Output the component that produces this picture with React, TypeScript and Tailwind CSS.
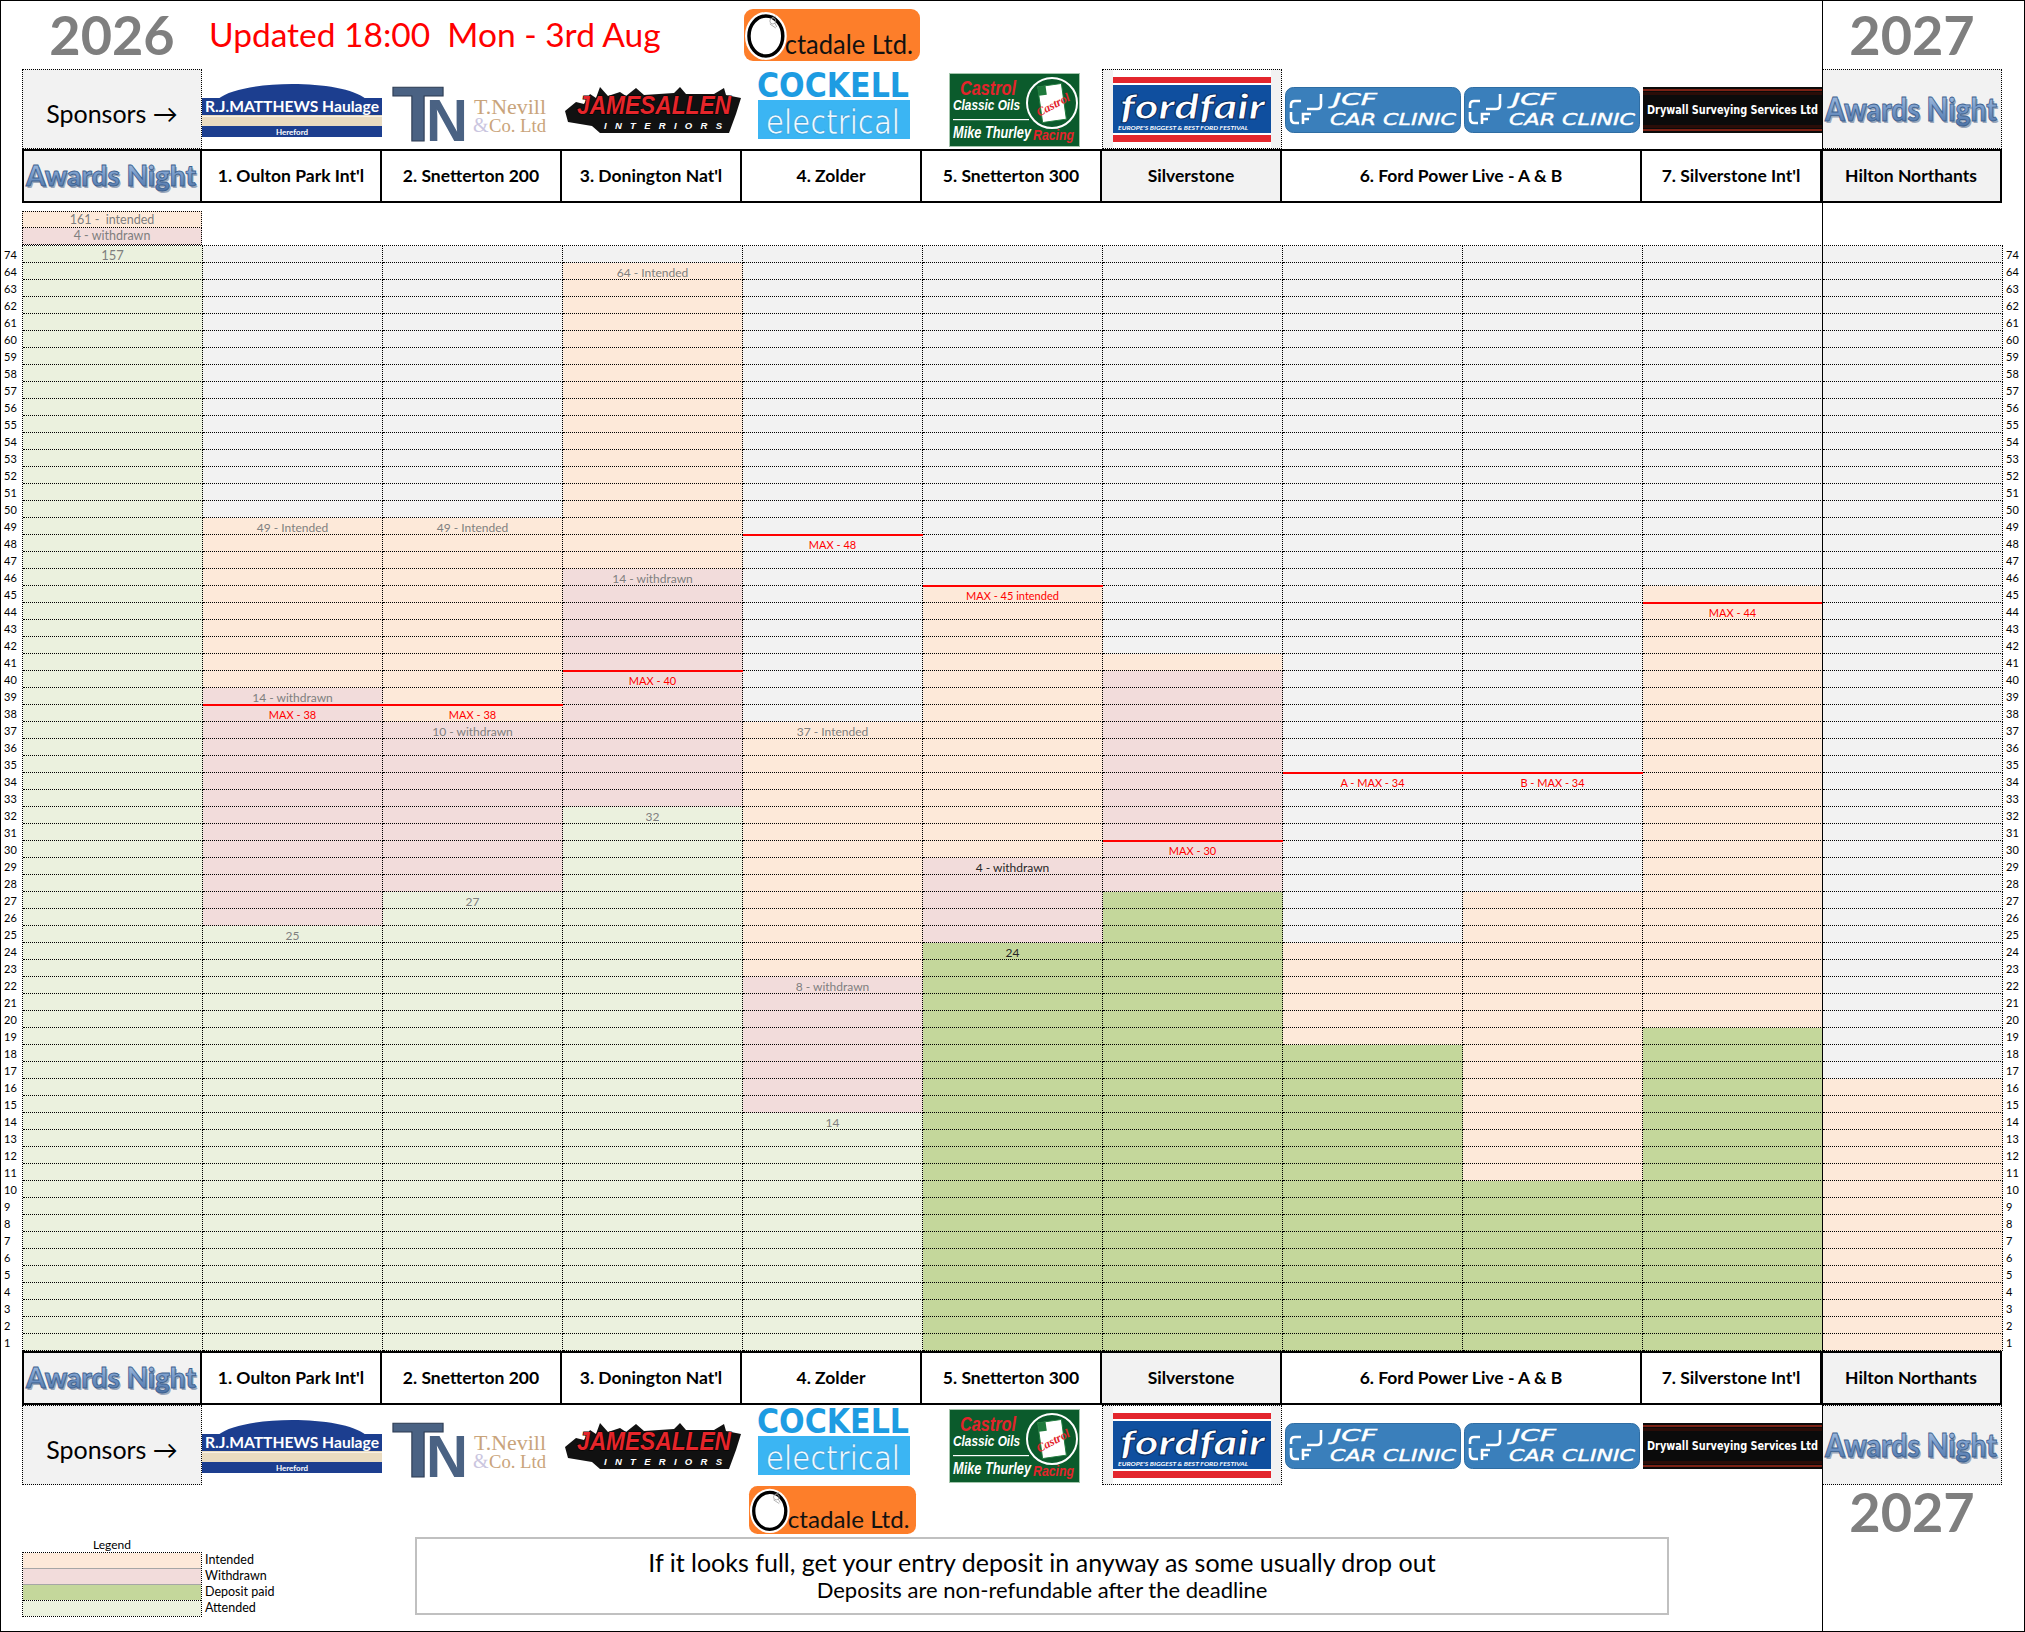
import React, { useId } from 'react';

type St = 'e' | 'i' | 'w' | 'd' | 'a';

const BG: Record<St, string> = {
  e: 'bg-[#f2f2f2]',
  i: 'bg-[#fde9d9]',
  w: 'bg-[#f2dcdb]',
  d: 'bg-[#c4d79b]',
  a: 'bg-[#ebf1de]',
};

// 74 on top, then 64 down to 1
const LABELS = [74, ...Array.from({ length: 64 }, (_, i) => 64 - i)];

type Note = { t: string; c?: 'max' | 'dark' | 'big' };
type Col = { segs: [number, St][]; notes?: Record<number, Note>; max?: number };

const COLS: Col[] = [
  { segs: [[74, 'a']], notes: { 74: { t: '157', c: 'big' } } },
  {
    segs: [[74, 'e'], [49, 'i'], [39, 'w'], [25, 'a']],
    notes: { 49: { t: '49 - Intended' }, 39: { t: '14 - withdrawn' }, 38: { t: 'MAX - 38', c: 'max' }, 25: { t: '25' } },
    max: 38,
  },
  {
    segs: [[74, 'e'], [49, 'i'], [37, 'w'], [27, 'a']],
    notes: { 49: { t: '49 - Intended' }, 38: { t: 'MAX - 38', c: 'max' }, 37: { t: '10 - withdrawn' }, 27: { t: '27' } },
    max: 38,
  },
  {
    segs: [[74, 'e'], [64, 'i'], [46, 'w'], [32, 'a']],
    notes: { 64: { t: '64 - Intended' }, 46: { t: '14 - withdrawn' }, 40: { t: 'MAX - 40', c: 'max' }, 32: { t: '32' } },
    max: 40,
  },
  {
    segs: [[74, 'e'], [37, 'i'], [22, 'w'], [14, 'a']],
    notes: { 48: { t: 'MAX - 48', c: 'max' }, 37: { t: '37 - Intended' }, 22: { t: '8 - withdrawn' }, 14: { t: '14' } },
    max: 48,
  },
  {
    segs: [[74, 'e'], [45, 'i'], [29, 'w'], [24, 'd']],
    notes: { 45: { t: 'MAX - 45 intended', c: 'max' }, 29: { t: '4 - withdrawn', c: 'dark' }, 24: { t: '24', c: 'dark' } },
    max: 45,
  },
  { segs: [[74, 'e'], [41, 'i'], [40, 'w'], [27, 'd']], notes: { 30: { t: 'MAX - 30', c: 'max' } }, max: 30 },
  { segs: [[74, 'e'], [24, 'i'], [18, 'd']], notes: { 34: { t: 'A - MAX - 34', c: 'max' } }, max: 34 },
  { segs: [[74, 'e'], [27, 'i'], [10, 'd']], notes: { 34: { t: 'B - MAX - 34', c: 'max' } }, max: 34 },
  { segs: [[74, 'e'], [45, 'i'], [19, 'd']], notes: { 44: { t: 'MAX - 44', c: 'max' } }, max: 44 },
  { segs: [[74, 'e'], [16, 'i']] },
];

function statusOf(col: Col, l: number): St {
  let s: St = col.segs[0][1];
  for (const [from, st] of col.segs) if (l <= from) s = st;
  return s;
}

const noteClass = (c?: Note['c']) => {
  if (c === 'max') return 'text-[11px] text-[#ff0000]';
  if (c === 'dark') return 'text-[12px] text-[#262626]';
  if (c === 'big') return 'text-[13px] text-[#7f7f7f]';
  return 'text-[12px] text-[#7f7f7f]';
};

/* ---------- logos ---------- */

const AwardsNight = ({ w, h, size, y }: { w: number; h: number; size: number; y: number }) => {
  const gid = 'aw' + useId().replace(/[^a-zA-Z0-9]/g, '');
  return (
    <svg width={w} height={h} viewBox={`0 0 ${w} ${h}`} overflow="visible">
      <defs>
        <linearGradient id={gid} x1="0" y1="0" x2="0" y2="1">
          <stop offset="0" stopColor="#b3cbea" />
          <stop offset="0.55" stopColor="#7397c7" />
          <stop offset="1" stopColor="#4a70a3" />
        </linearGradient>
      </defs>
      <text x={3.5} y={y + 2} fontSize={size} fontWeight="900" fill="#9aa7ba" fontFamily="Lato, sans-serif" textLength={w - 6} lengthAdjust="spacingAndGlyphs">
        Awards Night
      </text>
      <text x={2} y={y} fontSize={size} fontWeight="900" fill={`url(#${gid})`} stroke="#3d618f" strokeWidth="0.9" fontFamily="Lato, sans-serif" textLength={w - 6} lengthAdjust="spacingAndGlyphs">
        Awards Night
      </text>
    </svg>
  );
};

const Octadale = ({ w, h }: { w: number; h: number }) => (
  <svg width={w} height={h} viewBox="0 0 177 52" preserveAspectRatio="none" overflow="visible">
    <rect x="0" y="0" width="177" height="52" rx="9" fill="#fd7e2a" />
    <ellipse cx="22" cy="27" rx="21" ry="24" fill="#fff" />
    <ellipse cx="22" cy="27" rx="17" ry="20" fill="#fff" stroke="#000" strokeWidth="3.5" />
    <g stroke="#9a9a9a" strokeWidth="0.8" fill="none">
      <circle cx="29" cy="12" r="3" />
      <path d="M26 15 l6 4 M28 9 l4 -2 M31 14 l2 4" />
    </g>
    <text x="41" y="45" fontSize="26" fill="#111" fontFamily="Lato, sans-serif" textLength="129" lengthAdjust="spacingAndGlyphs">
      ctadale Ltd.
    </text>
  </svg>
);

const RJ = () => (
  <svg width="180" height="56" viewBox="0 0 180 56" overflow="visible">
    <path d="M16 17 C40 -3 140 -3 164 17 Z" fill="#1c3e8f" />
    <rect x="0" y="16" width="180" height="17" fill="#1c3e8f" />
    <rect x="0" y="33" width="180" height="11" fill="#e9dbc0" />
    <rect x="0" y="34" width="180" height="1" fill="#f7f0e3" />
    <rect x="0" y="44" width="180" height="11" fill="#1c3e8f" />
    <text x="3" y="30" fontSize="16" fontWeight="700" fill="#fff" fontFamily="Lato, sans-serif" textLength="174" lengthAdjust="spacingAndGlyphs">
      R.J.MATTHEWS Haulage
    </text>
    <text x="90" y="53" fontSize="8" fontWeight="700" fill="#fff" textAnchor="middle" fontFamily="Lato, sans-serif">
      Hereford
    </text>
  </svg>
);

const TNevill = () => (
  <svg width="160" height="72" viewBox="0 0 160 72" overflow="visible">
    <text x="0" y="69" fontSize="78" fontWeight="700" fill="#4a6283" stroke="#2c3b52" strokeWidth="1" fontFamily="Liberation Sans, sans-serif" textLength="52" lengthAdjust="spacingAndGlyphs">
      T
    </text>
    <text x="34" y="69" fontSize="60" fontWeight="700" fill="#4a6283" stroke="#fff" strokeWidth="2.5" paintOrder="stroke" fontFamily="Liberation Sans, sans-serif" textLength="42" lengthAdjust="spacingAndGlyphs">
      N
    </text>
    <text x="82" y="42" fontSize="20" fill="#c9a47b" fontFamily="Liberation Serif, serif" textLength="72" lengthAdjust="spacingAndGlyphs">
      T.Nevill
    </text>
    <text x="81" y="60" fontSize="20" fill="#cbc6df" fontFamily="Liberation Serif, serif">
      &amp;
    </text>
    <text x="97" y="60" fontSize="19" fill="#c9a47b" fontFamily="Liberation Serif, serif" textLength="57" lengthAdjust="spacingAndGlyphs">
      Co. Ltd
    </text>
  </svg>
);

const JamesAllen = () => (
  <svg width="178" height="48" viewBox="0 0 178 48" overflow="visible">
    <polygon
      points="1,25 12,16 20,18 26,8 32,12 36,1 44,10 56,6 62,10 72,2 80,9 110,7 116,1 122,8 150,8 160,2 162,9 177,12 172,28 165,47 36,47 28,40 4,36"
      fill="#111"
    />
    <text x="13" y="28" fontSize="25" fontWeight="700" fontStyle="italic" fill="#e5252a" stroke="#000" strokeWidth="1.2" paintOrder="stroke" fontFamily="Liberation Sans, sans-serif" textLength="154" lengthAdjust="spacingAndGlyphs">
      JAMESALLEN
    </text>
    <text x="40" y="43" fontSize="9.5" fontWeight="700" fontStyle="italic" fill="#fff" fontFamily="Liberation Sans, sans-serif" textLength="118" lengthAdjust="spacing">
      INTERIORS
    </text>
  </svg>
);

const Cockell = () => (
  <svg width="154" height="68" viewBox="0 0 154 68" overflow="visible">
    <text x="0" y="25" fontSize="34" fontWeight="700" fill="#1d9ce2" fontFamily="DejaVu Sans Condensed, DejaVu Sans, sans-serif" textLength="152" lengthAdjust="spacingAndGlyphs">
      COCKELL
    </text>
    <rect x="1" y="28" width="152" height="39" fill="#3bb5f3" />
    <text x="9" y="62" fontSize="33" fontWeight="300" fill="#eef9ff" stroke="#2a9ad8" strokeWidth="0.6" fontFamily="DejaVu Sans Condensed, DejaVu Sans, sans-serif" textLength="134" lengthAdjust="spacingAndGlyphs">
      electrical
    </text>
  </svg>
);

const Castrol = () => (
  <svg width="131" height="74" viewBox="0 0 131 74" overflow="visible">
    <rect x="0.5" y="0.5" width="130" height="73" fill="#0b5b2c" stroke="#a4c6ad" />
    <text x="11" y="22" fontSize="20" fontWeight="700" fontStyle="italic" fill="#e3242b" fontFamily="Liberation Sans, sans-serif" textLength="56" lengthAdjust="spacingAndGlyphs">
      Castrol
    </text>
    <text x="4" y="37" fontSize="15" fontWeight="700" fontStyle="italic" fill="#fff" fontFamily="Liberation Sans, sans-serif" textLength="67" lengthAdjust="spacingAndGlyphs">
      Classic Oils
    </text>
    <rect x="4" y="46" width="76" height="1.2" fill="#fff" />
    <text x="4" y="65" fontSize="17" fontWeight="700" fontStyle="italic" fill="#fff" fontFamily="Liberation Sans, sans-serif" textLength="78" lengthAdjust="spacingAndGlyphs">
      Mike Thurley
    </text>
    <text x="84" y="67" fontSize="14" fontWeight="700" fontStyle="italic" fill="#e3242b" fontFamily="Liberation Sans, sans-serif" textLength="41" lengthAdjust="spacingAndGlyphs">
      Racing
    </text>
    <circle cx="103" cy="30" r="25" fill="#0b5b2c" stroke="#fff" strokeWidth="2" />
    <g transform="rotate(-8 103 30)">
      <rect x="91" y="12" width="24" height="36" fill="#fff" stroke="#1e7a3c" />
      <rect x="91" y="12" width="8" height="9" fill="#1e7a3c" />
    </g>
    <text x="103" y="36" fontSize="12" fontWeight="700" fontStyle="italic" fill="#e3242b" textAnchor="middle" transform="rotate(-28 103 30)" fontFamily="Liberation Serif, serif">
      Castrol
    </text>
  </svg>
);

const Fordfair = () => (
  <svg width="158" height="78" viewBox="0 0 158 78" overflow="visible">
    <rect width="158" height="78" fill="#fff" />
    <rect y="7" width="158" height="6" fill="#e3262d" />
    <rect y="15" width="158" height="48" fill="#0f4f9f" />
    <rect y="65" width="158" height="7" fill="#e3262d" />
    <text x="7" y="49" fontSize="35" fontWeight="900" fontStyle="italic" fill="#fff" stroke="#082f66" strokeWidth="1" fontFamily="Lato, sans-serif" textLength="145" lengthAdjust="spacingAndGlyphs">
      fordfair
    </text>
    <text x="5" y="60" fontSize="6" fontWeight="700" fontStyle="italic" fill="#fff" fontFamily="Lato, sans-serif" textLength="130" lengthAdjust="spacingAndGlyphs">
      EUROPE'S BIGGEST &amp; BEST FORD FESTIVAL
    </text>
  </svg>
);

const JCF = () => (
  <svg width="176" height="46" viewBox="0 0 176 46" overflow="visible">
    <rect x="0.5" y="0.5" width="175" height="45" rx="8" fill="#3a7fbb" stroke="#2f6da3" />
    <g fill="none" stroke="#fff" strokeWidth="2.6">
      <path d="M16 14 H10 Q6 14 6 18 V21" />
      <path d="M36 7 V18 Q36 22 32 22 H22" />
      <path d="M6 25 V31 Q6 36 10 36 H14" />
      <path d="M18 37 V27 H26 M18 32 H24" />
    </g>
    <text x="48" y="18" fontSize="16" fontStyle="italic" fill="#fff" stroke="#fff" strokeWidth="0.4" fontFamily="DejaVu Sans, sans-serif" textLength="44" lengthAdjust="spacingAndGlyphs">
      JCF
    </text>
    <text x="45" y="38" fontSize="16" fontStyle="italic" fill="#fff" stroke="#fff" strokeWidth="0.4" fontFamily="DejaVu Sans, sans-serif" textLength="126" lengthAdjust="spacingAndGlyphs">
      CAR CLINIC
    </text>
  </svg>
);

const Drywall = () => (
  <svg width="180" height="46" viewBox="0 0 180 46" overflow="visible">
    <rect width="180" height="46" fill="#0b0b0b" />
    <rect y="2" width="180" height="2" fill="#7c2215" />
    <rect y="5" width="180" height="3" fill="#2a0d08" />
    <rect y="38" width="180" height="3" fill="#2a0d08" />
    <rect y="42" width="180" height="2" fill="#7c2215" />
    <text x="4" y="27" fontSize="12" fontWeight="700" fill="#fff" fontFamily="DejaVu Sans Condensed, DejaVu Sans, sans-serif" textLength="171" lengthAdjust="spacingAndGlyphs">
      Drywall Surveying Services  Ltd
    </text>
  </svg>
);

/* ---------- rows ---------- */

const LogoRow = () => (
  <div className="flex h-[80px]">
    <div className="w-[21px] shrink-0" />
    <div className="w-[180px] h-full shrink-0 border border-dotted border-black bg-[#f2f2f2] flex items-center justify-center pt-[10px] text-[25px]">
      Sponsors →
    </div>
    <div className="w-[180px] shrink-0 pt-[13px]"><RJ /></div>
    <div className="w-[180px] shrink-0 pl-[10px] pt-[3px]"><TNevill /></div>
    <div className="w-[180px] shrink-0 pl-[2px] pt-[17px]"><JamesAllen /></div>
    <div className="w-[180px] shrink-0 pl-[15px] pt-[3px]"><Cockell /></div>
    <div className="w-[180px] shrink-0 pl-[27px] pt-[4px]"><Castrol /></div>
    <div className="w-[180px] h-full shrink-0 border border-dotted border-black bg-[#f2f2f2] pl-[10px]"><Fordfair /></div>
    <div className="w-[180px] shrink-0 pl-[3px] pt-[18px]"><JCF /></div>
    <div className="w-[180px] shrink-0 pl-[2px] pt-[18px]"><JCF /></div>
    <div className="w-[180px] shrink-0 pl-[1px] pt-[18px]"><Drywall /></div>
    <div className="w-[180px] h-full shrink-0 border border-dotted border-black bg-[#f2f2f2] flex items-center justify-center">
      <AwardsNight w={178} h={60} size={32} y={42} />
    </div>
  </div>
);

const EVENTS = ["1. Oulton Park Int'l", '2. Snetterton 200', "3. Donington Nat'l", '4. Zolder', '5. Snetterton 300'];

const HeaderRow = () => {
  const cell = 'h-full shrink-0 border-r-2 border-black flex items-center justify-center';
  return (
    <div className="flex h-[54px]">
      <div className="w-[21px] shrink-0" />
      <div className="flex h-full border-y-2 border-black text-[17.5px] font-bold">
        <div className={`${cell} w-[180px] border-l-2 bg-[#f2f2f2]`}>
          <AwardsNight w={176} h={48} size={29} y={34} />
        </div>
        {EVENTS.map((e) => (
          <div key={e} className={`${cell} w-[180px]`}>{e}</div>
        ))}
        <div className={`${cell} w-[180px] bg-[#f2f2f2]`}>Silverstone</div>
        <div className={`${cell} w-[360px]`}>6. Ford Power Live - A &amp; B</div>
        <div className={`${cell} w-[180px]`}>7. Silverstone Int'l</div>
        <div className={`${cell} w-[180px] bg-[#f2f2f2]`}>Hilton Northants</div>
      </div>
    </div>
  );
};

const GridCol = ({ col }: { col: Col }) => (
  <div className="w-[180px] shrink-0">
    {LABELS.map((l) => {
      const s = statusOf(col, l);
      const n = col.notes?.[l];
      return (
        <div key={l} className={`relative h-[17px] border-r border-b border-dotted border-black text-center leading-[16px] ${BG[s]}`}>
          {col.max === l && <div className="absolute left-0 right-[-1px] top-[-1.5px] h-[2px] bg-[#ff0000]" />}
          {n && <span className={noteClass(n.c)}>{n.t}</span>}
        </div>
      );
    })}
  </div>
);

const RowNums = () => (
  <div className="w-[21px] shrink-0 border-t border-transparent">
    {LABELS.map((l) => (
      <div key={l} className="h-[17px] pl-[3px] text-[11px] leading-[17px]">{l}</div>
    ))}
  </div>
);

const Legend = () => (
  <div className="w-[393px] shrink-0">
    <div className="w-[180px] text-center text-[12px] leading-[15px]">Legend</div>
    <div className="flex">
      <div className="w-[180px] border border-dotted border-black">
        <div className="h-[15px] bg-[#fde9d9]" />
        <div className="h-px bg-[#a6a6a6]" />
        <div className="h-[15px] bg-[#f2dcdb]" />
        <div className="h-px bg-[#a6a6a6]" />
        <div className="h-[15px] bg-[#c4d79b]" />
        <div className="h-px border-t border-dotted border-black" />
        <div className="h-[15px] bg-[#ebf1de]" />
      </div>
      <div className="pl-[3px] text-[12.5px] leading-[16px]">
        <div>Intended</div>
        <div>Withdrawn</div>
        <div>Deposit paid</div>
        <div>Attended</div>
      </div>
    </div>
  </div>
);

export default function App() {
  return (
    <div className="relative w-[2025px] h-[1632px] overflow-hidden border border-black bg-white text-black [font-family:Lato,'Noto_Sans',sans-serif]">
      {/* title */}
      <div className="flex h-[68px]">
        <div className="w-[21px] shrink-0" />
        <div className="w-[180px] shrink-0 pt-[7px] text-center text-[54px] font-bold leading-none text-[#7f7f7f]">2026</div>
        <div className="w-[540px] shrink-0 pl-[7px] pt-[17px] whitespace-pre text-[33.5px] leading-none text-[#ff0000]">
          Updated 18:00  Mon - 3rd Aug
        </div>
        <div className="w-[180px] shrink-0 pl-[2px] pt-[8px]"><Octadale w={176} h={52} /></div>
        <div className="w-[900px] shrink-0" />
        <div className="w-[180px] shrink-0 pt-[7px] text-center text-[54px] font-bold leading-none text-[#7f7f7f]">2027</div>
      </div>

      <LogoRow />
      <HeaderRow />
      <div className="h-[8px]" />

      {/* totals above the grid */}
      <div className="flex">
        <div className="w-[21px] shrink-0" />
        <div className="w-[180px] text-center text-[12.5px] leading-[15px] text-[#7f7f7f]">
          <div className="h-[17px] border border-dotted border-black bg-[#fde9d9] whitespace-pre">161 -  intended</div>
          <div className="h-[17px] border-x border-b border-dotted border-black bg-[#f2dcdb]">4 - withdrawn</div>
        </div>
      </div>

      {/* entries grid */}
      <div className="flex">
        <RowNums />
        <div className="flex border-t border-l border-dotted border-black">
          {COLS.map((c, i) => (
            <GridCol key={i} col={c} />
          ))}
        </div>
        <RowNums />
      </div>

      <HeaderRow />
      <LogoRow />

      {/* bottom */}
      <div className="flex h-[52px]">
        <div className="w-[21px] shrink-0" />
        <div className="w-[720px] shrink-0" />
        <div className="w-[180px] shrink-0 pl-[7px] pt-[1px]"><Octadale w={167} h={48} /></div>
        <div className="w-[900px] shrink-0" />
        <div className="w-[180px] shrink-0 text-center text-[54px] font-bold leading-none text-[#7f7f7f]">2027</div>
      </div>
      <div className="flex">
        <div className="w-[21px] shrink-0" />
        <Legend />
        <div className="w-[1254px] h-[78px] shrink-0 border-2 border-[#c0c0c0] flex flex-col items-center pt-[8px]">
          <div className="text-[25px] leading-[30px]">If it looks full, get your entry deposit in anyway as some usually drop out</div>
          <div className="text-[22px] leading-[26px]">Deposits are non-refundable after the deadline</div>
        </div>
      </div>

      <div className="absolute left-[1821px] top-0 bottom-0 w-px bg-black" />
    </div>
  );
}
